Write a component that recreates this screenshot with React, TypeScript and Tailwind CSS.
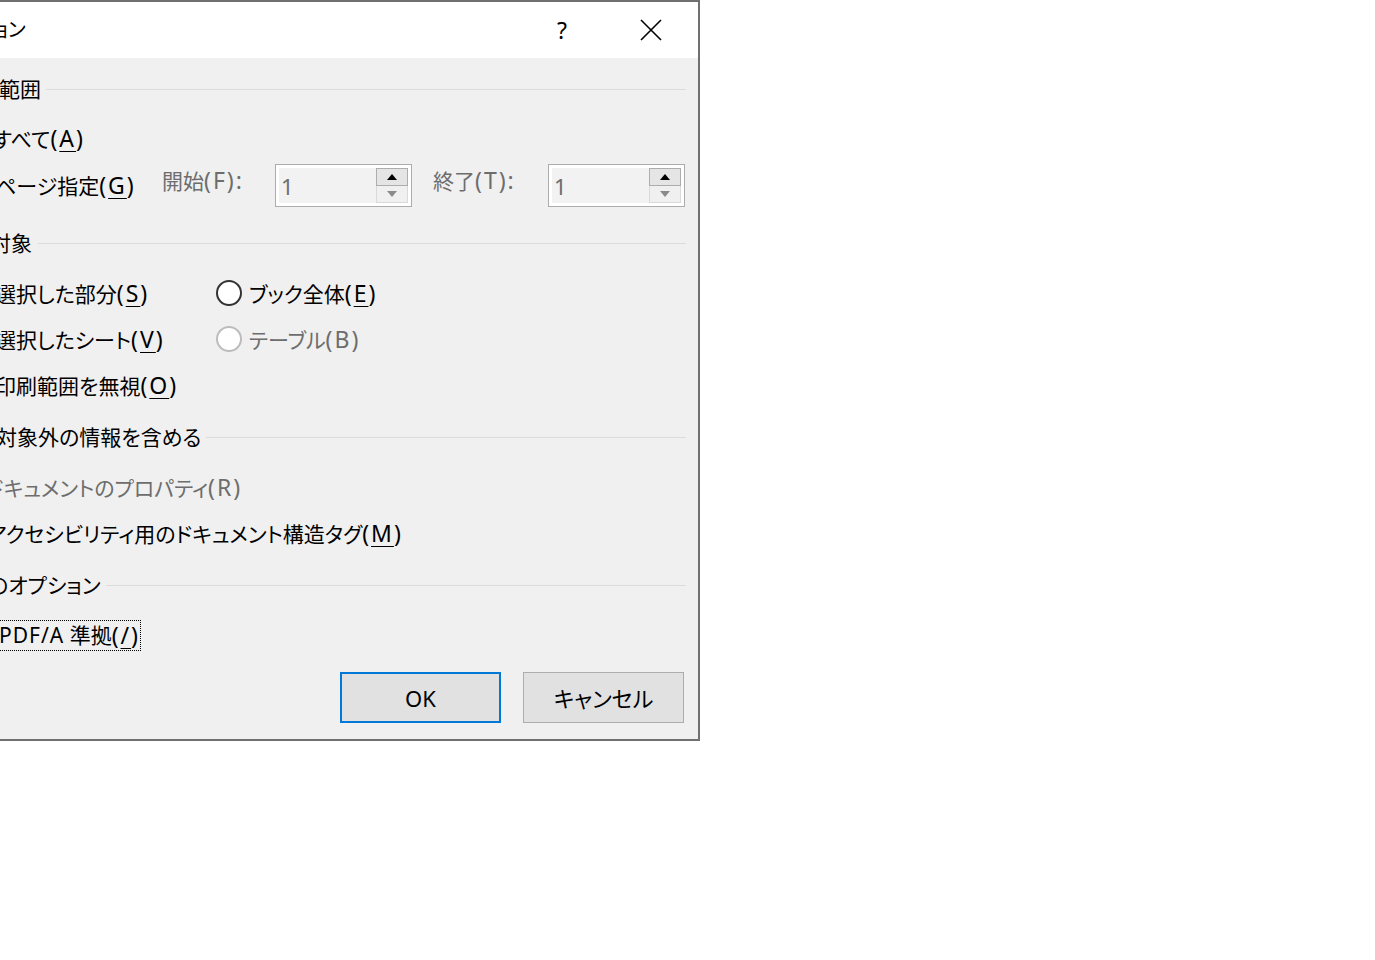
import React from 'react';

const font =
  "font-['Noto_Sans','Noto_Sans_CJK_JP',sans-serif] [font-feature-settings:'palt']";

// Latin run in the dialog font is wider than Noto Sans, so widen it a bit
function Lat({ children }: { children: React.ReactNode }) {
  return <span className="text-[23px] tracking-[2px]">{children}</span>;
}

function Key({ children }: { children: React.ReactNode }) {
  return <span className="underline decoration-1 underline-offset-[4px]">{children}</span>;
}

function Section({ label, shift, gap = 5 }: { label: string; shift: string; gap?: number }) {
  return (
    <div className="flex h-[36px] items-center pr-[12px]">
      <span className={`shrink-0 whitespace-nowrap ${shift}`}>{label}</span>
      <div className="h-px flex-1 bg-[#dcdcdc]" style={{ marginLeft: gap }} />
    </div>
  );
}

function Radio({ disabled }: { disabled?: boolean }) {
  return (
    <span
      className={`mr-[7px] inline-block h-[26px] w-[26px] shrink-0 rounded-full border-2 bg-white ${
        disabled ? 'border-[#bcbcbc]' : 'border-[#333333]'
      }`}
    />
  );
}

function SpinBox() {
  return (
    <div className="flex h-[43px] w-[137px] border border-[#acacac] bg-white p-[3px]">
      <div className="flex flex-1 items-center bg-[#f2f2f2] pl-[2px] text-[22px] text-[#6d6d6d]">1</div>
      <div className="flex w-[32px] flex-col">
        <div className="flex h-[19px] items-center justify-center border border-[#adadad] bg-[#e5e5e5]">
          <svg width="10" height="6" viewBox="0 0 10 6">
            <path d="M0 6 L5 0 L10 6 Z" fill="#000" />
          </svg>
        </div>
        <div className="flex h-[18px] items-center justify-center border border-t-0 border-[#d9d9d9] bg-[#f0f0f0]">
          <svg width="10" height="6" viewBox="0 0 10 6">
            <path d="M0 0 L5 6 L10 0 Z" fill="#8a8a8a" />
          </svg>
        </div>
      </div>
    </div>
  );
}

function Button({ label, primary }: { label: string; primary?: boolean }) {
  return (
    <div
      className={`flex h-[51px] w-[161px] items-center justify-center bg-[#e1e1e1] text-[22px] ${
        primary ? 'border-2 border-[#0078d7]' : 'border border-[#adadad]'
      }`}
    >
      {label}
    </div>
  );
}

export default function App() {
  return (
    <div className={`min-h-[960px] w-[1375px] bg-white text-[21px] leading-none text-black ${font}`}>
      <div className="flex h-[741px] w-[700px] flex-col overflow-hidden border-t-2 border-r-2 border-b-2 border-[#707070]">
        {/* title bar */}
        <div className="flex h-[56px] shrink-0 items-center bg-white">
          <span className="-ml-[7px] text-[20px]">ョン</span>
          <span className="ml-auto mr-[73px] text-[23px]">?</span>
          <svg className="mr-[36px]" width="22" height="22" viewBox="0 0 22 22">
            <path d="M1 1 L21 21 M21 1 L1 21" stroke="#000" strokeWidth="1.6" />
          </svg>
        </div>

        {/* body */}
        <div className="flex flex-1 flex-col bg-[#f0f0f0]">
          <div className="mt-[13px]">
            <Section label="範囲" shift="-ml-[1px]" />
          </div>

          <div className="mt-[13px] flex h-[36px] items-center">
            <span className="-ml-[7px] whitespace-nowrap">
              すべて<Lat>(<Key>A</Key>)</Lat>
            </span>
          </div>

          <div className="mt-[8px] flex h-[43px] items-center">
            <div className="w-[162px] shrink-0 whitespace-nowrap">
              <span className="-ml-[5px] inline-block">
                ページ指定<Lat>(<Key>G</Key>)</Lat>
              </span>
            </div>
            <span className="w-[113px] shrink-0 -translate-y-[5px] whitespace-nowrap text-[#6d6d6d]">
              開始<Lat>(F):</Lat>
            </span>
            <SpinBox />
            <span className="ml-[21px] w-[115px] shrink-0 -translate-y-[5px] whitespace-nowrap text-[#6d6d6d]">
              終了<Lat>(T):</Lat>
            </span>
            <SpinBox />
          </div>

          <div className="mt-[18px]">
            <Section label="対象" shift="-ml-[10px]" gap={6} />
          </div>

          <div className="mt-[14px] flex h-[36px] items-center">
            <div className="w-[216px] shrink-0 whitespace-nowrap">
              <span className="-ml-[5px] inline-block">
                選択した部分<Lat>(<Key>S</Key>)</Lat>
              </span>
            </div>
            <Radio />
            <span className="whitespace-nowrap">
              ブック全体<Lat>(<Key>E</Key>)</Lat>
            </span>
          </div>

          <div className="mt-[10px] flex h-[36px] items-center">
            <div className="w-[216px] shrink-0 whitespace-nowrap">
              <span className="-ml-[5px] inline-block">
                選択したシート<Lat>(<Key>V</Key>)</Lat>
              </span>
            </div>
            <Radio disabled />
            <span className="whitespace-nowrap text-[#6d6d6d]">
              テーブル<Lat>(B)</Lat>
            </span>
          </div>

          <div className="mt-[10px] flex h-[36px] items-center">
            <span className="-ml-[5px] whitespace-nowrap">
              印刷範囲を無視<Lat>(<Key>O</Key>)</Lat>
            </span>
          </div>

          <div className="mt-[16px]">
            <Section label="対象外の情報を含める" shift="-ml-[4px]" gap={5} />
          </div>

          <div className="mt-[14px] flex h-[36px] items-center">
            <span className="-ml-[13px] whitespace-nowrap text-[#6d6d6d]">
              ドキュメントのプロパティ<Lat>(R)</Lat>
            </span>
          </div>

          <div className="mt-[10px] flex h-[36px] items-center">
            <span className="-ml-[13px] whitespace-nowrap">
              アクセシビリティ用のドキュメント構造タグ<Lat>(<Key>M</Key>)</Lat>
            </span>
          </div>

          <div className="mt-[16px]">
            <Section label="のオプション" shift="-ml-[12px]" gap={5} />
          </div>

          <div className="mt-[14px] flex h-[36px] items-center">
            <span className="-ml-[2px] flex h-[31px] items-center whitespace-nowrap border border-dotted border-black">
              <span className="tracking-[1px]">PDF/A</span>&nbsp;準拠<Lat>(<Key>/</Key>)</Lat>
            </span>
          </div>

          <div className="mt-[19px] flex justify-end gap-[22px] pr-[14px]">
            <Button label="OK" primary />
            <Button label="キャンセル" />
          </div>
        </div>
      </div>
    </div>
  );
}
